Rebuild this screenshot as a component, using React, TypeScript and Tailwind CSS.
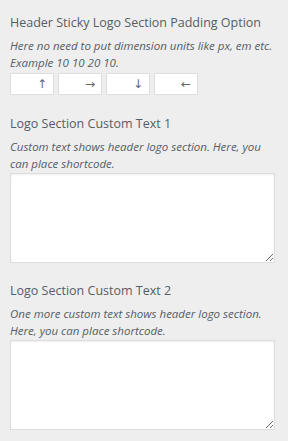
import React from "react";

const arrows = ["↑", "→", "↓", "←"];

function Title({ children }: { children: React.ReactNode }) {
  return (
    <div className="text-[12.5px] leading-[24px] text-[#555d66] whitespace-nowrap">
      {children}
    </div>
  );
}

function Desc({ children }: { children: React.ReactNode }) {
  return (
    <p className="text-[11.5px] leading-[17px] italic text-[#555d66] mt-[2px] mb-[1px]">
      {children}
    </p>
  );
}

export default function App() {
  return (
    <div
      className="w-[288px] h-[441px] bg-[#eeeeee] pl-[10px] pr-[12px] pt-[11px]"
      style={{ fontFamily: '"Open Sans", "Noto Sans", sans-serif' }}
    >
      {/* Padding option */}
      <div>
        <Title>Header Sticky Logo Section Padding Option</Title>
        <Desc>
          Here no need to put dimension units like px, em etc. Example 10 10 20 10.
        </Desc>
        <div className="flex gap-[4px] mt-[2px]">
          {arrows.map((a) => (
            <div
              key={a}
              className="w-[44px] h-[22px] bg-white border border-[#dddddd] flex items-center justify-end pr-[6px] text-[12px] text-[#666666]"
              style={{ fontFamily: '"DejaVu Sans", sans-serif' }}
            >
              {a}
            </div>
          ))}
        </div>
      </div>

      {/* Custom text 1 */}
      <div className="mt-[17px]">
        <Title>Logo Section Custom Text 1</Title>
        <Desc>Custom text shows header logo section. Here, you can place shortcode.</Desc>
        <textarea className="block w-[265px] h-[90px] bg-white border border-[#dddddd] shadow-[inset_0_1px_2px_rgba(0,0,0,0.07)] outline-none resize-y" />
      </div>

      {/* Custom text 2 */}
      <div className="mt-[16px]">
        <Title>Logo Section Custom Text 2</Title>
        <Desc>
          One more custom text shows header logo section. Here, you can place shortcode.
        </Desc>
        <textarea className="block w-[265px] h-[90px] bg-white border border-[#dddddd] shadow-[inset_0_1px_2px_rgba(0,0,0,0.07)] outline-none resize-y" />
      </div>
    </div>
  );
}
